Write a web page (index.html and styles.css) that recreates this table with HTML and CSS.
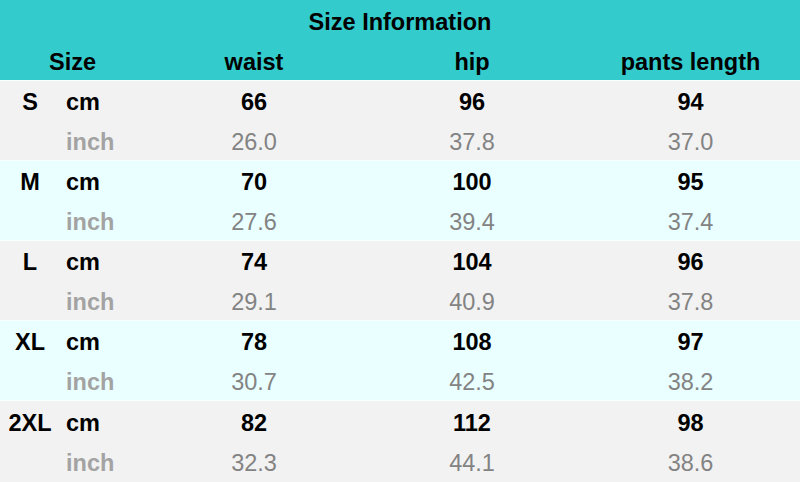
FILE: index.html
```
<!DOCTYPE html>
<html>
<head>
<meta charset="utf-8">
<link rel="stylesheet" href="styles.css">
</head>
<body>
<div class="chart">
  <div class="head">
    <div class="title">Size Information</div>
    <div class="cols">
      <div class="c-size">Size</div>
      <div class="c-val">waist</div>
      <div class="c-val">hip</div>
      <div class="c-val">pants length</div>
    </div>
  </div>

  <div class="band grey">
    <div class="row cm"><span class="sz">S</span><span class="unit">cm</span><span class="v">66</span><span class="v">96</span><span class="v">94</span></div>
    <div class="row inch"><span class="sz"></span><span class="unit">inch</span><span class="v">26.0</span><span class="v">37.8</span><span class="v">37.0</span></div>
  </div>
  <div class="band cyan">
    <div class="row cm"><span class="sz">M</span><span class="unit">cm</span><span class="v">70</span><span class="v">100</span><span class="v">95</span></div>
    <div class="row inch"><span class="sz"></span><span class="unit">inch</span><span class="v">27.6</span><span class="v">39.4</span><span class="v">37.4</span></div>
  </div>
  <div class="band grey">
    <div class="row cm"><span class="sz">L</span><span class="unit">cm</span><span class="v">74</span><span class="v">104</span><span class="v">96</span></div>
    <div class="row inch"><span class="sz"></span><span class="unit">inch</span><span class="v">29.1</span><span class="v">40.9</span><span class="v">37.8</span></div>
  </div>
  <div class="band cyan">
    <div class="row cm"><span class="sz">XL</span><span class="unit">cm</span><span class="v">78</span><span class="v">108</span><span class="v">97</span></div>
    <div class="row inch"><span class="sz"></span><span class="unit">inch</span><span class="v">30.7</span><span class="v">42.5</span><span class="v">38.2</span></div>
  </div>
  <div class="band grey last">
    <div class="row cm"><span class="sz">2XL</span><span class="unit">cm</span><span class="v">82</span><span class="v">112</span><span class="v">98</span></div>
    <div class="row inch"><span class="sz"></span><span class="unit">inch</span><span class="v">32.3</span><span class="v">44.1</span><span class="v">38.6</span></div>
  </div>
</div>
</body>
</html>
```
FILE: styles.css
```
html, body {
  margin: 0;
  padding: 0;
  background: #f2f2f2;
}
* {
  box-sizing: border-box;
}
.chart {
  width: 800px;
  height: 482px;
  font-family: "Liberation Sans", Arial, sans-serif;
  font-size: 23.5px;
  color: #000;
  display: flex;
  flex-direction: column;
}
.head {
  background: #33cbcb;
  height: 80px;
  display: flex;
  flex-direction: column;
  font-weight: bold;
  padding-top: 3px;
}
.title {
  height: 39px;
  display: flex;
  align-items: center;
  justify-content: center;
}
.cols {
  height: 38px;
  padding-top: 3px;
  display: grid;
  grid-template-columns: 145px 218px 218px 219px;
  align-items: center;
  text-align: center;
}
.band {
  height: 80px;
  display: flex;
  flex-direction: column;
  border-top: 1px solid #f8ffff;
}
.band.last {
  flex: 1;
}
.grey { background: #f2f2f2; }
.cyan { background: #eaffff; }
.row {
  flex: 1;
  padding-top: 4px;
  display: grid;
  grid-template-columns: 60px 85px 218px 218px 219px;
  align-items: center;
}
.sz {
  text-align: center;
  font-weight: bold;
}
.unit {
  padding-left: 6px;
  font-weight: bold;
}
.v {
  text-align: center;
}
.cm .v { font-weight: bold; }
.inch .unit { color: #a3a3a3; }
.inch .v { color: #838383; }
```
